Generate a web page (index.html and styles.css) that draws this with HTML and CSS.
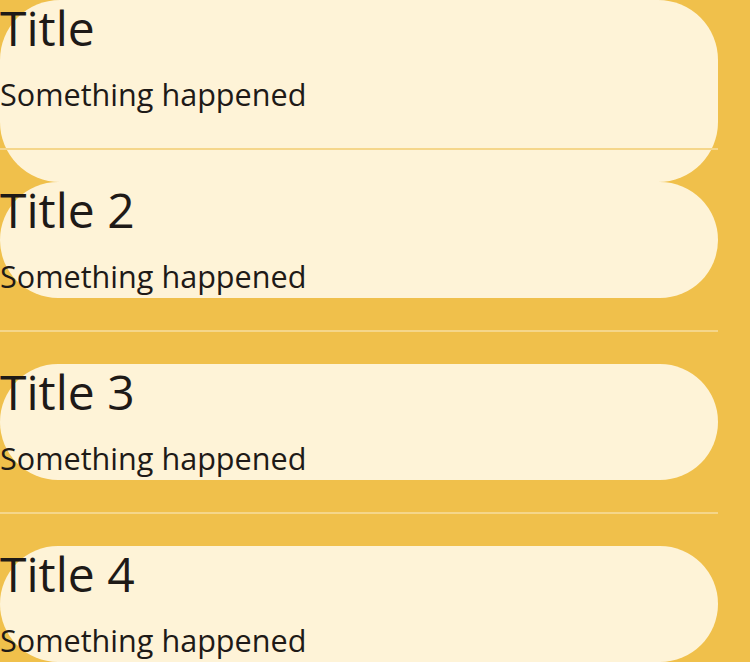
FILE: index.html
```html
<!DOCTYPE html>
<html>
<head>
<meta charset="utf-8">
<link rel="stylesheet" href="styles.css">
</head>
<body>
<div class="list">
  <div class="item">
    <div class="card card-tall">
      <div class="title">Title</div>
      <div class="subtitle">Something happened</div>
    </div>
    <div class="divider"></div>
  </div>
  <div class="item">
    <div class="card">
      <div class="title">Title 2</div>
      <div class="subtitle">Something happened</div>
    </div>
    <div class="divider"></div>
  </div>
  <div class="item">
    <div class="card">
      <div class="title">Title 3</div>
      <div class="subtitle">Something happened</div>
    </div>
    <div class="divider"></div>
  </div>
  <div class="item">
    <div class="card">
      <div class="title">Title 4</div>
      <div class="subtitle">Something happened</div>
    </div>
    <div class="divider"></div>
  </div>
</div>
</body>
</html>
```
FILE: styles.css
```css
html, body {
  margin: 0;
  padding: 0;
}
body {
  background: #f0c04b;
  font-family: "Open Sans", "Noto Sans", sans-serif;
  color: #1e1a17;
  width: 750px;
  height: 662px;
  overflow: hidden;
}
.list {
  display: flex;
  flex-direction: column;
  width: 718px;
}
.item {
  display: grid;
  grid-template-rows: 148px 2px 32px;
}
.card {
  grid-row: 1;
  grid-column: 1;
  align-self: start;
  height: 116px;
  background: #fef3d7;
  border-radius: 58px;
  display: flex;
  flex-direction: column;
}
.card-tall {
  grid-row: 1 / 4;
  height: 182px;
  border-radius: 60px;
}
.divider {
  grid-row: 2;
  grid-column: 1;
  background: #f5d68a;
  z-index: 1;
}
.title {
  font-size: 48px;
  line-height: 56px;
  letter-spacing: 0;
}
.subtitle {
  font-size: 30.6px;
  line-height: 40px;
  margin-top: 18px;
}
```
